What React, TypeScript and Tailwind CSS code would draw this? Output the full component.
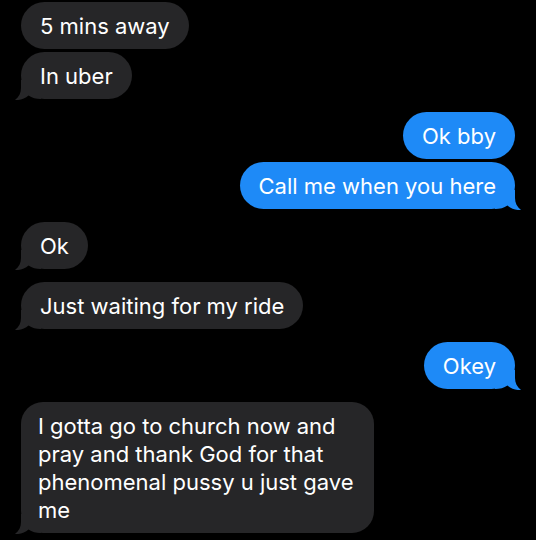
import React from 'react';

type Side = 'in' | 'out';

const Tail: React.FC<{ side: Side }> = ({ side }) => (
  <svg
    width="26"
    height="20"
    viewBox="0 0 26 20"
    className={
      side === 'in'
        ? 'absolute left-[-6px] bottom-[-1px] fill-[#262628]'
        : 'absolute right-[-6px] bottom-[-1px] fill-[#1e8af7] scale-x-[-1]'
    }
  >
    <path d="M6,0 L6,8 C6,13 4,17 0,20 C5,20.5 10,18.5 13.5,15.5 C17,18 21,19 26,19 L26,0 Z" />
  </svg>
);

const Bubble: React.FC<{ side: Side; tail?: boolean; children: React.ReactNode; className?: string }> = ({
  side,
  tail,
  children,
  className = '',
}) => (
  <div className={side === 'in' ? 'flex justify-start' : 'flex justify-end'}>
    <div
      className={`relative px-[19px] py-[9.5px] text-[22px] leading-[28px] text-white ${
        side === 'in' ? 'bg-[#262628]' : 'bg-[#1e8af7]'
      } ${className}`}
    >
      {tail && <Tail side={side} />}
      <span className="relative">{children}</span>
    </div>
  </div>
);

export default function App() {
  return (
    <div
      className="w-[536px] h-[540px] overflow-hidden bg-black px-[21px] pt-[2px] flex flex-col gap-[13px]"
      style={{ fontFamily: 'Inter, "Noto Sans", sans-serif' }}
    >
      <div className="flex flex-col gap-[3px]">
        <Bubble side="in" className="rounded-full">5 mins away</Bubble>
        <Bubble side="in" tail className="rounded-full">In uber</Bubble>
      </div>
      <div className="flex flex-col gap-[3px]">
        <Bubble side="out" className="rounded-full">Ok bby</Bubble>
        <Bubble side="out" tail className="rounded-full">Call me when you here</Bubble>
      </div>
      <Bubble side="in" tail className="rounded-full">Ok</Bubble>
      <Bubble side="in" tail className="rounded-full">Just waiting for my ride</Bubble>
      <Bubble side="out" tail className="rounded-full">Okey</Bubble>
      <Bubble side="in" tail className="rounded-[22px] w-[353px] !px-[17px]">
        I gotta go to church now and
        <br />
        pray and thank God for that
        <br />
        phenomenal pussy u just gave
        <br />
        me
      </Bubble>
    </div>
  );
}
